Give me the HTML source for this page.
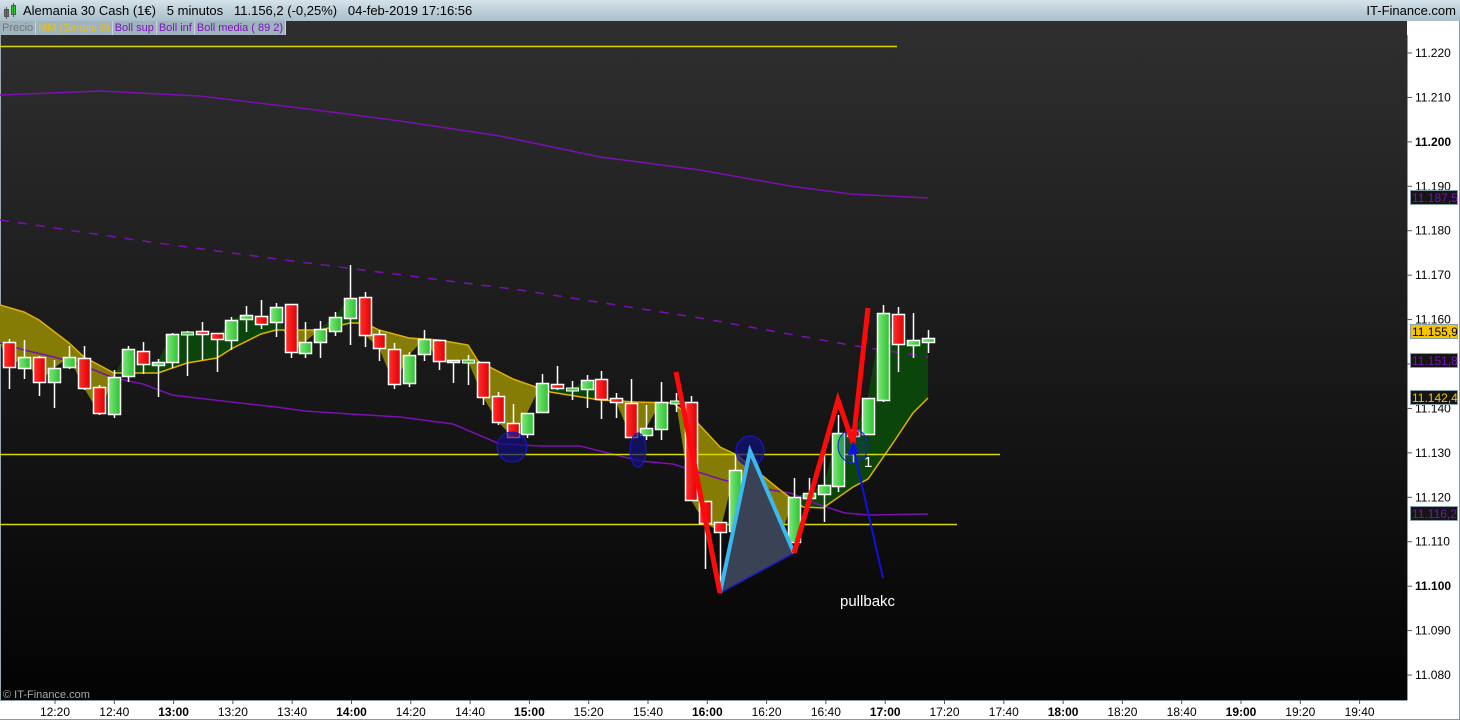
<!DOCTYPE html>
<html><head><meta charset="utf-8"><style>
html,body{margin:0;padding:0;width:1460px;height:720px;overflow:hidden;background:#fff;font-family:"Liberation Sans",sans-serif}
#hdr{position:absolute;left:0;top:0;width:1460px;height:21px;background:linear-gradient(#d4e2ea,#a9bfcb);font-size:13px;color:#000}
#hdr .t{position:absolute;left:23px;top:3px;white-space:pre}
#hdr .r{position:absolute;right:4px;top:3px}
#leg{position:absolute;left:0;top:21px;height:14px;font-size:11px;display:flex}
#leg span{background:#9fb3be;border-right:1px solid #c8d4da;padding:0 2px;line-height:14px;height:14px}
svg{position:absolute;left:0;top:0}
</style></head><body>
<svg id="s" width="1460" height="720" xmlns="http://www.w3.org/2000/svg">
<defs>
<linearGradient id="bg" x1="0" y1="0" x2="0" y2="1"><stop offset="0" stop-color="#2f2f2f"/><stop offset="1" stop-color="#030303"/></linearGradient>
<linearGradient id="gg" x1="0" x2="1"><stop offset="0" stop-color="#7be87b"/><stop offset="1" stop-color="#2ec02e"/></linearGradient>
<linearGradient id="rg" x1="0" x2="1"><stop offset="0" stop-color="#ff3030"/><stop offset="1" stop-color="#e00000"/></linearGradient>
<clipPath id="above"><polygon id="abv" points="0,0"/></clipPath>
</defs>
<rect x="0" y="21" width="1407" height="679" fill="url(#bg)"/>
<line x1="0.5" y1="35" x2="0.5" y2="700" stroke="#9aa8b0"/>
<g id="fill"></g>
<!-- bollinger -->
<polyline fill="none" stroke="#7a10b0" stroke-width="1.5" points="0,95 100,91 200,96 300,108 400,121 500,136 600,157 700,170 790,186 850,194 928,198"/>
<polyline fill="none" stroke="#7a10b0" stroke-width="1.5" stroke-dasharray="9,9" points="0,220 150,242 300,262 520,290 700,318 850,345 928,357"/>
<polyline fill="none" stroke="#7a10b0" stroke-width="1.5" points="0,343 24,350 54,357 84,366 114,378 143,384 172,395 231,402 276,407 305,411 350,414 400,417 453,424 500,444 540,446 580,446 600,451 640,461 673,464 720,479 747,486 790,493 820,505 845,513 870,515 928,514"/>
<polyline id="mm" fill="none" stroke="#e0b000" stroke-width="1.5" points=""/>
<!-- horizontal yellow -->
<line x1="0" y1="46.5" x2="897" y2="46.5" stroke="#d8d800" stroke-width="1.5"/>
<line x1="0" y1="454.5" x2="1000" y2="454.5" stroke="#d8d800" stroke-width="1.5"/>
<line x1="0" y1="524.5" x2="957" y2="524.5" stroke="#d8d800" stroke-width="1.5"/>
<g id="cand"></g>
<!-- ellipses -->
<ellipse cx="512" cy="447" rx="15" ry="15" fill="#10107a" fill-opacity="0.7" stroke="#1a1ad0"/>
<ellipse cx="638" cy="450" rx="8" ry="17" fill="#10107a" fill-opacity="0.7" stroke="#1a1ad0"/>
<ellipse cx="750" cy="451" rx="14" ry="15" fill="#10107a" fill-opacity="0.7" stroke="#1a1ad0"/>
<ellipse cx="853" cy="446" rx="15" ry="17" fill="#10407a" fill-opacity="0.3" stroke="#1a1ad0"/>
<polygon points="720,593 750,451 794,553" fill="#3a4256"/>
<line x1="720" y1="593" x2="794" y2="553" stroke="#1a1ad0" stroke-width="1.5"/>
<polyline fill="none" stroke="#3cb8f0" stroke-width="4" points="720,593 750,451 794,553"/>
<polyline fill="none" stroke="#ff0a0a" stroke-width="5" points="676,372 720,593"/>
<polyline fill="none" stroke="#ff0a0a" stroke-width="5" points="794,553 838,400 853,443 868,308"/>
<line x1="853" y1="446" x2="883" y2="578" stroke="#1010e0" stroke-width="2"/>
<polygon points="853,441 848,455 859,454" fill="#1010e0"/>
<text x="864" y="467" fill="#fff" font-size="15" font-family="Liberation Sans, sans-serif">1</text>
<text x="840" y="606" fill="#fff" font-size="15" font-family="Liberation Sans, sans-serif">pullbakc</text>
<text x="3" y="698" fill="#aaa" font-size="11" font-family="Liberation Sans, sans-serif">© IT-Finance.com</text>
<!-- axes -->
<rect x="1407" y="35" width="53" height="685" fill="#fff"/>
<rect x="0" y="700" width="1460" height="20" fill="#fff"/>
<line x1="1407.5" y1="35" x2="1407.5" y2="700" stroke="#8a9aa4"/>
<line x1="0" y1="700.5" x2="1407" y2="700.5" stroke="#8a9aa4"/>
<line x1="1459.5" y1="21" x2="1459.5" y2="720" stroke="#8a9aa4"/>
<line x1="0" y1="719.5" x2="1460" y2="719.5" stroke="#8a9aa4"/>
<g id="yax" font-size="12" font-family="Liberation Sans, sans-serif" fill="#000"></g>
<g id="xax" font-size="12" font-family="Liberation Sans, sans-serif" fill="#000"></g>
<g font-size="12" font-family="Liberation Sans, sans-serif">
<rect x="1410.5" y="190.5" width="47" height="14" fill="#151515" stroke="#8aa0aa"/><text x="1412" y="202" fill="#7a10c0">11.187,5</text>
<rect x="1410.5" y="324.5" width="47" height="14" fill="#f5c400" stroke="#8aa0aa"/><text x="1412" y="336" fill="#000">11.155,9</text>
<rect x="1410.5" y="353.5" width="47" height="14" fill="#151515" stroke="#8aa0aa"/><text x="1412" y="365" fill="#7a10c0">11.151,8</text>
<rect x="1410.5" y="390.5" width="47" height="14" fill="#151515" stroke="#8aa0aa"/><text x="1412" y="402" fill="#f5c400">11.142,4</text>
<rect x="1410.5" y="506.5" width="47" height="14" fill="#151515" stroke="#8aa0aa"/><text x="1412" y="518" fill="#7a10c0">11.116,2</text>
</g>
</svg>
<div id="hdr"><svg width="18" height="18" style="left:3px;top:2px"><rect x="1.5" y="7.5" width="4" height="7" fill="#e33" stroke="#555"/><line x1="3.5" y1="5" x2="3.5" y2="17" stroke="#555"/><rect x="8.5" y="3.5" width="4" height="9" fill="#3c3" stroke="#555"/><line x1="10.5" y1="1" x2="10.5" y2="15" stroke="#555"/></svg><span class="t">Alemania 30 Cash (1€)   5 minutos   11.156,2 (-0,25%)   04-feb-2019 17:16:56</span><span class="r">IT-Finance.com</span></div>
<div id="leg"><span style="color:#777">Precio</span><span style="color:#f0c000">MM (Simple 9)</span><span style="color:#8010c0">Boll sup</span><span style="color:#8010c0">Boll inf</span><span style="color:#8010c0">Boll media ( 89 2)</span></div>
<script>
var NS="http://www.w3.org/2000/svg";
function el(t,a,p){var e=document.createElementNS(NS,t);for(var k in a)e.setAttribute(k,a[k]);p.appendChild(e);return e;}
// [x, bodyTop, bodyBot, wickTop, wickBot, color]
var C=[[9,342,367,339,389,'r'],[24,357,368,340,379,'g'],[39,357,382,356,396,'r'],[54,368,382,360,408,'g'],[69,357,367,346,369,'g'],[84,358,388,346,390,'r'],[99,387,413,385,415,'r'],[114,377,414,370,418,'g'],[128,349,376,346,382,'g'],[143,351,364,342,374,'r'],[158,362,365,359,397,'g'],[172,334,362,333,368,'g'],[187,333,333,331,376,'g'],[202,331,334,322,360,'r'],[217,333,339,333,372,'r'],[231,320,340,317,350,'g'],[246,315,319,306,332,'g'],[261,316,324,300,329,'r'],[276,307,322,303,337,'g'],[291,304,352,304,358,'r'],[305,342,353,322,358,'g'],[320,329,342,321,358,'g'],[335,317,331,312,336,'g'],[350,298,318,265,345,'g'],[365,297,335,292,347,'r'],[379,334,348,330,361,'r'],[394,349,384,343,389,'r'],[409,355,383,352,387,'g'],[424,339,354,330,361,'g'],[439,340,361,340,370,'r'],[453,360,362,360,383,'g'],[468,361,361,355,385,'g'],[483,362,397,362,405,'r'],[498,396,422,392,425,'r'],[513,423,437,404,438,'r'],[527,413,434,413,438,'g'],[542,383,412,374,412,'g'],[557,384,388,366,390,'r'],[572,389,389,381,400,'g'],[587,380,389,375,408,'g'],[601,379,399,371,419,'r'],[616,398,402,393,418,'r'],[631,403,437,379,437,'r'],[646,428,435,405,440,'g'],[661,402,429,382,440,'g'],[676,402,402,393,412,'g'],[691,402,500,396,500,'r'],[705,501,523,501,569,'r'],[720,522,532,522,593,'r'],[735,470,531,455,531,'g'],[750,475,498,470,503,'r'],[765,498,531,490,540,'r'],[779,532,542,520,545,'r'],[794,497,542,478,542,'g'],[809,493,498,478,498,'g'],[824,485,494,455,522,'g'],[838,433,486,415,492,'g'],[853,430,436,425,463,'r'],[868,398,434,398,434,'g'],[883,313,400,305,402,'g'],[898,314,344,307,372,'r'],[913,340,345,313,358,'g'],[928,338,342,330,353,'g']];
var MM=[[0,305],[24,312],[39,320],[69,343],[84,357],[114,373],[158,373],[187,363],[217,358],[231,349],[261,334],[276,330],[320,330],[350,323],[365,323],[379,330],[409,338],[439,340],[468,345],[478,361],[513,379],[550,392],[600,400],[637,402],[673,403],[693,418],[720,447],[737,455],[780,490],[803,507],[823,508],[853,487],[868,479],[893,443],[913,413],[928,398]];
var mmS=MM.map(function(p){return p.join(',')}).join(' ');
document.getElementById('mm').setAttribute('points',mmS);
document.getElementById('abv').setAttribute('points','0,21 '+mmS+' 928,21');
var cl=[[0,342]].concat(C.map(function(c){return [c[0],c[5]=='r'?c[2]:c[1]];}));
var poly=cl.map(function(p){return p.join(',')}).join(' ')+' '+MM.slice().reverse().map(function(p){return p.join(',')}).join(' ');
var f=document.getElementById('fill');
el('polygon',{points:poly,fill:'#857c06','fill-rule':'evenodd'},f);
el('polygon',{points:poly,fill:'#0c450c','fill-rule':'evenodd','clip-path':'url(#above)'},f);
var g=document.getElementById('cand');
C.forEach(function(c){
 el('line',{x1:c[0]+.5,y1:c[3],x2:c[0]+.5,y2:c[4],stroke:'#fff','stroke-width':1.5},g);
 var h=Math.max(c[2]-c[1],1);
 if(c[2]-c[1]<2){el('rect',{x:c[0]-5.5,y:c[1]-1,width:12,height:3,fill:c[5]=='r'?'#f22':'#4c4',stroke:'#fff','stroke-width':1},g);}
 else el('rect',{x:c[0]-5.5,y:c[1]+.5,width:12,height:h,fill:c[5]=='r'?'url(#rg)':'url(#gg)',stroke:'#fff','stroke-width':1.5},g);
});
var y=document.getElementById('yax');
for(var p=11220;p>=11080;p-=10){var yy=53+(11220-p)/10*44.43;
 el('line',{x1:1407,y1:yy,x2:1412,y2:yy,stroke:'#555'},y);
 var t=el('text',{x:1415,y:yy+4},y);t.textContent='11.'+String(p-11000).padStart(3,'0');
 if(p%100==0)t.setAttribute('font-weight','bold');}
var x=document.getElementById('xax');
var labs=['12:20','12:40','13:00','13:20','13:40','14:00','14:20','14:40','15:00','15:20','15:40','16:00','16:20','16:40','17:00','17:20','17:40','18:00','18:20','18:40','19:00','19:20','19:40'];
labs.forEach(function(l,i){var xx=55+i*59.3;
 el('line',{x1:xx,y1:700,x2:xx,y2:704,stroke:'#555'},x);
 var t=el('text',{x:xx,y:716,'text-anchor':'middle'},x);t.textContent=l;
 if(l.slice(3)=='00')t.setAttribute('font-weight','bold');});
</script>
</body></html>
